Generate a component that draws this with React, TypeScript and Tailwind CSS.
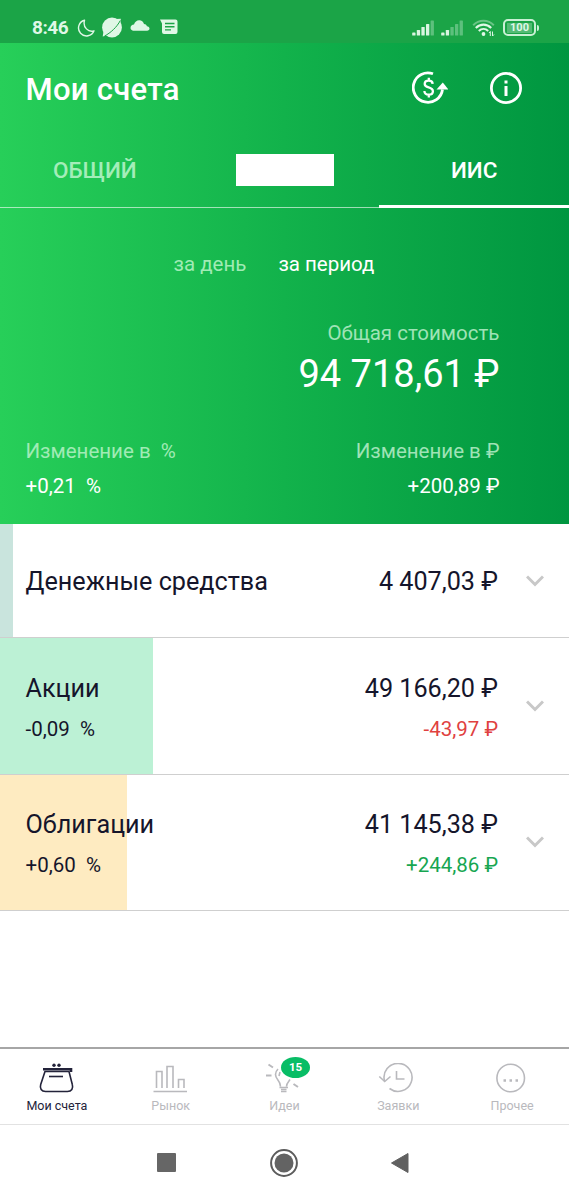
import type { ReactNode } from "react";
import clsx from "clsx";

type Holding = {
  name: string;
  value: string;
  percent?: string;
  change?: string;
  changeCls?: string;
  barCls: string;
  share: number;
};

const HOLDINGS: Holding[] = [
  {
    name: "Денежные средства",
    value: "4 407,03 ₽",
    barCls: "bg-[#c9e4dd]",
    share: 13,
  },
  {
    name: "Акции",
    value: "49 166,20 ₽",
    percent: "-0,09",
    change: "-43,97 ₽",
    changeCls: "text-[#e0413f]",
    barCls: "bg-[#bcf1d5]",
    share: 152.5,
  },
  {
    name: "Облигации",
    value: "41 145,38 ₽",
    percent: "+0,60",
    change: "+244,86 ₽",
    changeCls: "text-[#17a651]",
    barCls: "bg-[#feebc1]",
    share: 127,
  },
];

function Signal({ level }: { level: number }) {
  return (
    <svg className="h-4 w-[22px]" viewBox="0 0 22 16" fill="#d9f5e1">
      {[3, 5.5, 8.5, 11.5, 15].map((h, i) => (
        <rect
          key={h}
          x={0.2 + i * 4.6}
          y={15.5 - h}
          width="3.3"
          height={h}
          rx="0.6"
          opacity={i < level ? 1 : 0.35}
        />
      ))}
    </svg>
  );
}

function StatusBar() {
  return (
    <div className="flex h-[43px] items-center justify-between bg-[#1ba447] pt-3 pr-[30px] pl-8 text-[#dff7e6]">
      <div className="flex items-center">
        <span className="w-[45px] text-[19px] leading-5 font-bold tracking-[-0.5px]">8:46</span>
        <svg className="h-[18px] w-[18px]" viewBox="0 0 18 18" fill="none" stroke="currentColor" strokeWidth="1.4" strokeLinejoin="round">
          <path d="M7.5 1.2A8 8 0 1 0 17 11.8C11.500 13.500 5.500 8.500 7.500 1.200Z" />
        </svg>
        <svg className="ml-[6px] h-[22px] w-[22px]" viewBox="0 0 22 22">
          <circle cx="11" cy="10.500" r="9.900" fill="currentColor" />
          <path d="M15 2L19.800 1.800 19.500 6.500ZM1.700 19.500L2.500 14.500 6 18.500Z" fill="currentColor" />
          <path d="M3.500 19C9.500 16 16 10 19.300 3.500" fill="none" stroke="#1ba447" strokeWidth="1" />
        </svg>
        <svg className="mb-1 ml-[7px] h-[13px] w-5" viewBox="0 0 20 13" fill="currentColor">
          <path d="M4.500 11.700C2.300 11.700.5 10.800.5 8.900.5 7 2 5.700 4 5.500 4.700 3 6.800 1.300 9.200 1.300c2.400 0 4.200 1.500 4.800 3.700 1.400 0 2.500.8 2.900 2.200 1.600.2 2.600 1.100 2.600 2.400 0 1.300-1 2.100-2.400 2.100Z" />
        </svg>
        <svg className="mb-[2px] ml-[10px] h-4 w-[18px]" viewBox="0 0 18 16">
          <path d="M0 .5H15.500A2 2 0 0 1 17.500 2.500V13A2 2 0 0 1 15.500 15H4A2 2 0 0 1 2 13V4.500Z" fill="currentColor" />
          <path d="M5 4.500H14.500M5 7.700H14.500M5 10.900H11" stroke="#1ba447" strokeWidth="1.400" />
        </svg>
      </div>
      <div className="flex items-center">
        <Signal level={4} />
        <span className="w-[7px]" />
        <Signal level={2} />
        <svg className="ml-[9px] h-[18px] w-[23px]" viewBox="0 0 23 18" fill="none" stroke="currentColor">
          <path d="M1.200 6.200C7 .2 16 .2 21.800 6.200" strokeWidth="2" opacity=".4" />
          <path d="M3.800 9C8.300 4.500 14.700 4.500 19.200 9" strokeWidth="2.100" />
          <path d="M6.800 12C9.600 9.300 13.400 9.300 16.200 12" strokeWidth="2.100" />
          <circle cx="11.500" cy="15" r="1.900" fill="currentColor" stroke="none" />
          <path d="M18.300 17V12.500L17 14M20.500 12.500V17L22 15.500" strokeWidth="1" />
        </svg>
        <div className="ml-2 flex h-[17px] w-[33px] items-center justify-center rounded-[5px] border-2 border-[#c9f0d4]">
          <span className="flex h-[10px] w-[25px] items-center justify-center bg-white/25 text-[11px] leading-none font-bold">
            100
          </span>
        </div>
        <span className="ml-px h-[6px] w-[2px] rounded-r bg-[#c9f0d4]" />
      </div>
    </div>
  );
}

function TitleBar() {
  return (
    <div className="flex h-[93px] items-center pr-[46px] pl-[25.500px]">
      <h1 className="flex-1 text-[31px] leading-9 font-medium tracking-[0.3px]">Мои счета</h1>
      <svg className="mr-[41px] -mt-1 h-9 w-9" viewBox="0 0 36 36" fill="none" stroke="white">
        <path d="M21 3.800A14.700 14.700 0 1 0 30.500 19.500" strokeWidth="2.800" />
        <path d="M24.500 19.500L30.800 12.500 36.500 19.500Z" fill="white" stroke="none" />
        <path d="M20.700 13.800C20.500 11.800 19 10.700 16.700 10.700 14.300 10.700 12.700 12 12.700 14 12.700 18.500 20.900 16.200 20.900 21.200 20.900 23.300 19.200 24.700 16.800 24.700 14.300 24.700 12.500 23.300 12.400 21M16.800 7.800V11M16.800 24.500V27.500" strokeWidth="2.300" />
      </svg>
      <svg className="-mt-1 h-[34px] w-[34px]" viewBox="0 0 34 34">
        <circle cx="17" cy="17" r="14.600" fill="none" stroke="white" strokeWidth="2.800" />
        <path d="M15.500 9.500h3v3h-3zM15.500 15h3v10h-3z" fill="white" />
      </svg>
    </div>
  );
}

function Tabs() {
  return (
    <div className="flex h-[72px] text-[22.500px] font-medium">
      <div className="flex flex-1 items-center justify-center border-b border-white/60 pt-px pb-0.5 text-[#a4edb9]">
        ОБЩИЙ
      </div>
      <div className="flex flex-1 items-center justify-center border-b border-white/60 pb-1">
        <span className="h-8 w-[98px] bg-white" />
      </div>
      <div className="flex flex-1 items-center justify-center border-b-3 border-white">ИИС</div>
    </div>
  );
}

function Summary() {
  return (
    <div className="px-[25.500px] pt-[44px] pb-[26px] text-[20.500px] leading-6">
      <div className="flex justify-center gap-8 pr-[21px]">
        <span className="text-[#a0ebb5]">за день</span>
        <span>за период</span>
      </div>
      <div className="mt-[45px] pr-11 text-right">
        <div className="text-[#9fe3b6]">Общая стоимость</div>
        <div className="mt-[7px] text-[38px] leading-[44px]">94 718,61 ₽</div>
      </div>
      <div className="mt-[43px] flex justify-between pr-11">
        <div>
          <div className="whitespace-pre text-[#a0ebb5]">{"Изменение в  %"}</div>
          <div className="mt-[11px] whitespace-pre">{"+0,21  %"}</div>
        </div>
        <div className="text-right">
          <div className="text-[#9fe3b6]">Изменение в ₽</div>
          <div className="mt-[11px]">+200,89 ₽</div>
        </div>
      </div>
    </div>
  );
}

function HoldingRow({ item }: { item: Holding }) {
  return (
    <div
      className={clsx(
        "grid border-b border-[#cfcfcf] text-[#15152b]",
        item.percent ? "h-[136.500px]" : "h-[114px]"
      )}
    >
      <div className={clsx("col-start-1 row-start-1", item.barCls)} style={{ width: item.share }} />
      <div className="col-start-1 row-start-1 flex items-center pr-[25px] pl-[25.500px]">
        <div className="flex-1 pt-[3px]">
          <div className="text-[25.200px] leading-[30px]">{item.name}</div>
          {item.percent && (
            <div className="mt-[13px] text-[20.500px] leading-6 whitespace-pre">{item.percent + "  %"}</div>
          )}
        </div>
        <div className="pt-[3px] text-right">
          <div className="text-[25.200px] leading-[30px]">{item.value}</div>
          {item.change && (
            <div className={clsx("mt-[13px] text-[20.500px] leading-6", item.changeCls)}>{item.change}</div>
          )}
        </div>
        <svg className="ml-[28px] h-3 w-[18px]" viewBox="0 0 18 12" fill="none" stroke="#c8c8c8" strokeWidth="3">
          <path d="M1 1.500L9 9.500 17 1.500" />
        </svg>
      </div>
    </div>
  );
}

function NavItem({ label, active, children }: { label: string; active?: boolean; children: ReactNode }) {
  return (
    <div
      className={clsx(
        "flex flex-1 flex-col items-center pt-[14px]",
        active ? "text-[#23233a]" : "text-[#b9b9bd]"
      )}
    >
      <svg className="h-[34px] w-10" viewBox="0 0 40 34" fill="none" stroke="currentColor" strokeWidth="1.600">
        {children}
      </svg>
      <span className="mt-px text-[12.500px] leading-4">{label}</span>
    </div>
  );
}

function BottomNav() {
  return (
    <nav className="flex h-[78px] border-t-2 border-b border-t-[#a6a6a6] border-b-[#e2e2e2]">
      <NavItem label="Мои счета" active>
        <path d="M6 6.300H34V9" strokeWidth="2.600" />
        <path d="M8 8.500L3.700 21.500C2.500 25.500 4.500 28.500 8.500 28.500H30.500C34.500 28.500 36.500 25.500 35.300 21.500L32 8.500Z" />
        <path d="M12 13.500H26" />
        <circle cx="17" cy="2.200" r="1.700" fill="currentColor" stroke="none" />
        <circle cx="22" cy="2.200" r="1.700" fill="currentColor" stroke="none" />
      </NavItem>
      <NavItem label="Рынок">
        <path d="M2.500 28.500H36" />
        <path d="M5.500 25V8.500H11V25M16 25V3.500H22V25M27.500 25V16.500H33V25" />
      </NavItem>
      <NavItem label="Идеи">
        <path d="M16.500 23.500C16.500 17 11.500 16.500 11.500 11.500 11.500 9 12.500 7.500 14 6M22.500 23.500C22.500 20.500 24.500 18.500 26 16.500M15 13L16 9M15.500 24.500H24M17 28.500H22.500M17 26.500H22.500" />
        <path d="M4.500 1.500L9 4.500M2 12.500H7.500M29.500 21L34 24" strokeWidth="2" />
      </NavItem>
      <NavItem label="Заявки">
        <path d="M6.500 18A14 14 0 1 1 11.500 25.500" />
        <path d="M1.300 13.500L6.700 18.500 12.500 13.500M18.500 8V16H26.500" />
      </NavItem>
      <NavItem label="Прочее">
        <circle cx="18.700" cy="15" r="13.800" />
        <path d="M11.500 17.500h2.500M17.500 17.500h2.500M23.500 17.500h2.500" strokeWidth="2.400" />
      </NavItem>
    </nav>
  );
}

function SystemNav() {
  return (
    <div className="flex h-[75px] items-center pl-[157px]">
      <span className="size-[19px] rounded-[1px] bg-[#666]" />
      <svg className="ml-[94px] size-[28px]" viewBox="0 0 28 28">
        <circle cx="14" cy="14" r="12.900" fill="none" stroke="#5c5c5c" strokeWidth="2" />
        <circle cx="14" cy="14" r="9.500" fill="#636363" />
      </svg>
      <svg className="ml-[92px] h-[22px] w-[19px]" viewBox="0 0 19 22">
        <path d="M1.500 11L18 1.500V20.500Z" fill="#606060" stroke="#606060" strokeLinejoin="round" />
      </svg>
    </div>
  );
}

export default function App() {
  return (
    <div className="relative flex h-[1200px] w-[569px] flex-col overflow-hidden bg-white font-[Roboto,sans-serif]">
      <StatusBar />
      <header className="bg-linear-to-r/srgb from-[#27cf59] via-[#12b24b] to-[#009640] text-white">
        <TitleBar />
        <Tabs />
        <Summary />
      </header>
      <main className="flex-1">
        {HOLDINGS.map((item) => (
          <HoldingRow key={item.name} item={item} />
        ))}
      </main>
      <BottomNav />
      <span className="absolute top-[1057px] left-[281px] flex h-[21px] w-[29px] items-center justify-center rounded-[50%] bg-[#08bd66] text-[11.500px] font-bold text-white">
        15
      </span>
      <SystemNav />
    </div>
  );
}
